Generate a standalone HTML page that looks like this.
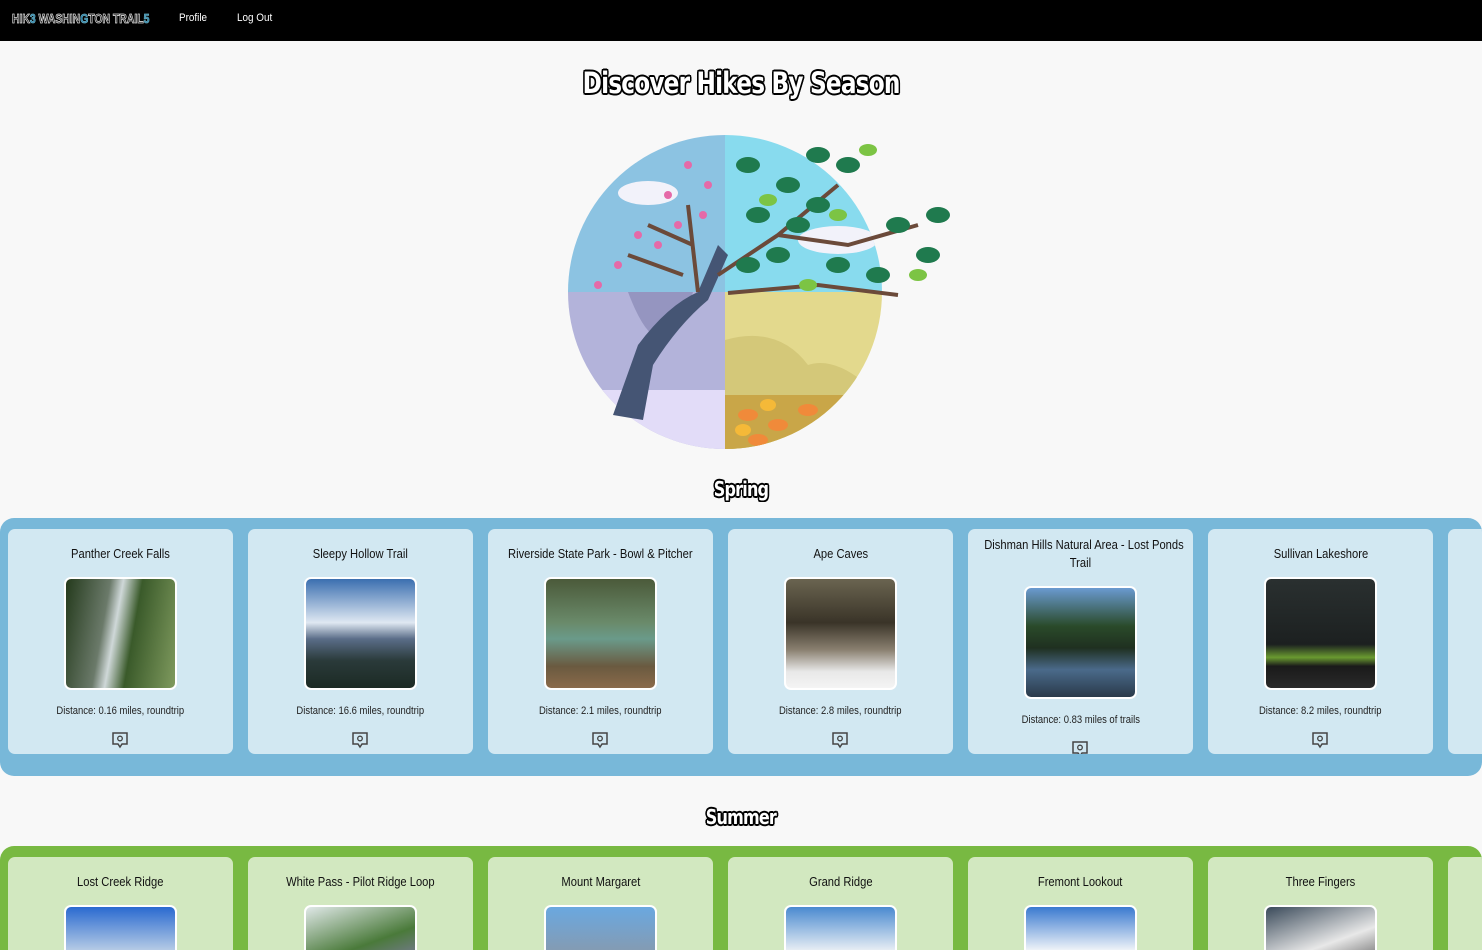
<!DOCTYPE html>
<html><head><meta charset="utf-8">
<style>
*{margin:0;padding:0;box-sizing:border-box}
html,body{width:1482px;height:950px;overflow:hidden}
body{background:#f8f8f8;font-family:"Liberation Sans",sans-serif;position:relative}
.nav{position:absolute;left:0;top:0;width:1482px;height:41px;background:#000}
.logo{position:absolute;left:12px;top:11px;font:bold 13px "Liberation Sans",sans-serif;color:#111;-webkit-text-stroke:0.8px #ddd;white-space:nowrap;transform:scaleX(0.8);transform-origin:0 0}
.logo b{color:#2a7ca8;-webkit-text-stroke:0.8px #6ab}
.nav a{position:absolute;top:12px;color:#fff;font-size:11px;text-decoration:none;transform:scaleX(0.9);transform-origin:0 0}
.h{position:absolute;left:0;width:1482px;text-align:center;color:#fff;font-family:"DejaVu Sans","Liberation Sans",sans-serif;font-weight:bold;letter-spacing:-1px;text-shadow:-1.5px -1.5px 0 #000,1.5px -1.5px 0 #000,-1.5px 1.5px 0 #000,1.5px 1.5px 0 #000,0 2px 0 #000,2px 0 0 #000,-2px 0 0 #000,0 -2px 0 #000}
.h span{display:inline-block;transform:scaleX(0.8)}
.row{position:absolute;left:0;width:1482px;border-radius:14px;overflow:hidden}
.card{position:absolute;top:11px;width:225px;height:225px;border-radius:7px;text-align:center;overflow:hidden}
.t{position:absolute;left:0;width:225px;font-size:13px;color:#111;line-height:18px;white-space:nowrap}
.t span,.d span{display:inline-block;transform:scaleX(0.86)}
.p{position:absolute;left:56px;width:113px;height:113px;border:2px solid #fff;border-radius:7px}
.d{position:absolute;left:0;width:225px;font-size:11px;color:#222;white-space:nowrap}
.i{position:absolute;left:103px}
.s .card{height:93px;border-radius:7px 7px 0 0}
</style></head><body>
<div class="nav">
<div class="logo">HIK<b>3</b> WASHIN<b>G</b>TON TRAIL<b>5</b></div>
<a style="left:179px">Profile</a><a style="left:237px">Log Out</a>
</div>
<div class="h" style="top:66px;font-size:29px"><span>Discover Hikes By Season</span></div>
<svg style="position:absolute;left:518px;top:125px" width="448" height="332" viewBox="0 0 448 332">
<defs><clipPath id="c"><circle cx="207" cy="167" r="157"/></clipPath></defs>
<g clip-path="url(#c)">
<rect x="0" y="0" width="207" height="167" fill="#8cc3e2"/>
<rect x="207" y="0" width="250" height="167" fill="#88dbee"/>
<rect x="0" y="167" width="207" height="170" fill="#b3b3da"/>
<rect x="0" y="265" width="207" height="70" fill="#e2dcf8"/>
<path d="M110 167 Q145 260 175 167Z" fill="#9595c0"/>
<rect x="207" y="167" width="250" height="170" fill="#e3d98d"/>
<path d="M207 215 Q260 200 290 240 Q320 230 360 270 L360 340 L207 340Z" fill="#d4c879"/>
<rect x="207" y="270" width="140" height="70" fill="#c9a648"/>
<g fill="#f08a3a"><ellipse cx="230" cy="290" rx="10" ry="6"/><ellipse cx="260" cy="300" rx="10" ry="6"/><ellipse cx="290" cy="285" rx="10" ry="6"/><ellipse cx="240" cy="315" rx="10" ry="6"/><ellipse cx="280" cy="320" rx="10" ry="6"/><ellipse cx="310" cy="300" rx="10" ry="6"/></g>
<g fill="#f5b938"><ellipse cx="250" cy="280" rx="8" ry="6"/><ellipse cx="300" cy="315" rx="8" ry="6"/><ellipse cx="225" cy="305" rx="8" ry="6"/></g>
<ellipse cx="130" cy="68" rx="30" ry="12" fill="#f2f2fa"/>
<ellipse cx="320" cy="115" rx="40" ry="14" fill="#f2f2fa"/>
</g>
<path d="M95 290 L120 220 Q150 180 180 167 L200 120 L210 130 L190 175 Q160 200 135 240 L125 295Z" fill="#455574"/>
<path d="M180 167 L170 80 M175 120 L130 100 M165 150 L110 130 M200 150 L260 110 L320 60 M260 110 L330 120 L400 100 M210 168 L300 160 L380 170" stroke="#6b4a3a" stroke-width="4" fill="none"/>
<g fill="#e56aa8"><circle cx="170" cy="40" r="4"/><circle cx="150" cy="70" r="4"/><circle cx="120" cy="110" r="4"/><circle cx="100" cy="140" r="4"/><circle cx="80" cy="160" r="4"/><circle cx="185" cy="90" r="4"/><circle cx="140" cy="120" r="4"/><circle cx="190" cy="60" r="4"/><circle cx="160" cy="100" r="4"/></g>
<g fill="#1f7a4e"><ellipse cx="230" cy="40" rx="12" ry="8"/><ellipse cx="270" cy="60" rx="12" ry="8"/><ellipse cx="300" cy="30" rx="12" ry="8"/><ellipse cx="240" cy="90" rx="12" ry="8"/><ellipse cx="280" cy="100" rx="12" ry="8"/><ellipse cx="330" cy="40" rx="12" ry="8"/><ellipse cx="230" cy="140" rx="12" ry="8"/><ellipse cx="260" cy="130" rx="12" ry="8"/><ellipse cx="320" cy="140" rx="12" ry="8"/><ellipse cx="380" cy="100" rx="12" ry="8"/><ellipse cx="410" cy="130" rx="12" ry="8"/><ellipse cx="420" cy="90" rx="12" ry="8"/><ellipse cx="360" cy="150" rx="12" ry="8"/><ellipse cx="300" cy="80" rx="12" ry="8"/></g>
<g fill="#7cc444"><ellipse cx="250" cy="75" rx="9" ry="6"/><ellipse cx="320" cy="90" rx="9" ry="6"/><ellipse cx="400" cy="150" rx="9" ry="6"/><ellipse cx="290" cy="160" rx="9" ry="6"/><ellipse cx="350" cy="25" rx="9" ry="6"/></g>
</svg>
<div class="h" style="top:477px;font-size:20px"><span>Spring</span></div>
<div class="h" style="top:805px;font-size:20px"><span>Summer</span></div>

<div class="row" style="top:518px;height:258px;background:#78b8d9">
<div class="card" style="left:8px;background:#d2e8f2"><div class="t" style="top:16px"><span>Panther Creek Falls</span></div><div class="p" style="top:48px;background:linear-gradient(100deg,#243a1c,#6b7a6a 35%,#cfd8d8 45%,#3a5a2a 60%,#7f9a5e)"></div><div class="d" style="top:176px"><span>Distance: 0.16 miles, roundtrip</span></div>
<svg class="i" style="top:202px" width="18" height="18" viewBox="0 0 18 18"><path d="M2 2h14v11h-5l-2 3-2-3H2z" fill="none" stroke="#444" stroke-width="1.5"/><circle cx="9" cy="7.5" r="2.3" fill="none" stroke="#444" stroke-width="1.3"/></svg></div>
<div class="card" style="left:248px;background:#d2e8f2"><div class="t" style="top:16px"><span>Sleepy Hollow Trail</span></div><div class="p" style="top:48px;background:linear-gradient(180deg,#3b6fb0,#dfe8f2 40%,#5a6d88 55%,#2a3a3a 75%,#1c2a24)"></div><div class="d" style="top:176px"><span>Distance: 16.6 miles, roundtrip</span></div>
<svg class="i" style="top:202px" width="18" height="18" viewBox="0 0 18 18"><path d="M2 2h14v11h-5l-2 3-2-3H2z" fill="none" stroke="#444" stroke-width="1.5"/><circle cx="9" cy="7.5" r="2.3" fill="none" stroke="#444" stroke-width="1.3"/></svg></div>
<div class="card" style="left:488px;background:#d2e8f2"><div class="t" style="top:16px"><span>Riverside State Park - Bowl &amp; Pitcher</span></div><div class="p" style="top:48px;background:linear-gradient(180deg,#4b5a3a,#6a8a6a 40%,#6a9a8a 55%,#6a5a40 80%,#8a6a4a)"></div><div class="d" style="top:176px"><span>Distance: 2.1 miles, roundtrip</span></div>
<svg class="i" style="top:202px" width="18" height="18" viewBox="0 0 18 18"><path d="M2 2h14v11h-5l-2 3-2-3H2z" fill="none" stroke="#444" stroke-width="1.5"/><circle cx="9" cy="7.5" r="2.3" fill="none" stroke="#444" stroke-width="1.3"/></svg></div>
<div class="card" style="left:728px;background:#d2e8f2"><div class="t" style="top:16px"><span>Ape Caves</span></div><div class="p" style="top:48px;background:linear-gradient(180deg,#6a6450,#3a3428 40%,#8a8070 65%,#e8e8e8 85%,#f4f4f4)"></div><div class="d" style="top:176px"><span>Distance: 2.8 miles, roundtrip</span></div>
<svg class="i" style="top:202px" width="18" height="18" viewBox="0 0 18 18"><path d="M2 2h14v11h-5l-2 3-2-3H2z" fill="none" stroke="#444" stroke-width="1.5"/><circle cx="9" cy="7.5" r="2.3" fill="none" stroke="#444" stroke-width="1.3"/></svg></div>
<div class="card" style="left:968px;background:#d2e8f2"><div class="t" style="top:7px"><span>Dishman Hills Natural Area - Lost Ponds</span><br><span>Trail</span></div><div class="p" style="top:57px;background:linear-gradient(180deg,#6a9ad0,#2a4a2a 35%,#1f3020 55%,#4a6a8a 75%,#2a3a4a)"></div><div class="d" style="top:185px"><span>Distance: 0.83 miles of trails</span></div>
<svg class="i" style="top:211px" width="18" height="18" viewBox="0 0 18 18"><path d="M2 2h14v11h-5l-2 3-2-3H2z" fill="none" stroke="#444" stroke-width="1.5"/><circle cx="9" cy="7.5" r="2.3" fill="none" stroke="#444" stroke-width="1.3"/></svg></div>
<div class="card" style="left:1208px;background:#d2e8f2"><div class="t" style="top:16px"><span>Sullivan Lakeshore</span></div><div class="p" style="top:48px;background:linear-gradient(180deg,#2a3030,#1c2020 60%,#6a9a30 72%,#1a1a1a 80%,#2a2a2a)"></div><div class="d" style="top:176px"><span>Distance: 8.2 miles, roundtrip</span></div>
<svg class="i" style="top:202px" width="18" height="18" viewBox="0 0 18 18"><path d="M2 2h14v11h-5l-2 3-2-3H2z" fill="none" stroke="#444" stroke-width="1.5"/><circle cx="9" cy="7.5" r="2.3" fill="none" stroke="#444" stroke-width="1.3"/></svg></div>
<div class="card" style="left:1448px;background:#d2e8f2"></div>
</div>

<div class="row s" style="top:846px;height:104px;border-radius:14px 14px 0 0;background:#78b942">
<div class="card" style="left:8px;background:#d2e8c0"><div class="t" style="top:16px"><span>Lost Creek Ridge</span></div><div class="p" style="top:48px;background:linear-gradient(180deg,#2a6ad0,#c8d8e8 45%,#3a5a3a 70%,#a09080)"></div></div>
<div class="card" style="left:248px;background:#d2e8c0"><div class="t" style="top:16px"><span>White Pass - Pilot Ridge Loop</span></div><div class="p" style="top:48px;background:linear-gradient(160deg,#e0e8e8,#4a7a3a 40%,#8a7ab8 70%)"></div></div>
<div class="card" style="left:488px;background:#d2e8c0"><div class="t" style="top:16px"><span>Mount Margaret</span></div><div class="p" style="top:48px;background:linear-gradient(180deg,#6aa8e0,#8a98a8 50%)"></div></div>
<div class="card" style="left:728px;background:#d2e8c0"><div class="t" style="top:16px"><span>Grand Ridge</span></div><div class="p" style="top:48px;background:linear-gradient(180deg,#4a8ad0,#e8eef4 40%,#7a9ab0)"></div></div>
<div class="card" style="left:968px;background:#d2e8c0"><div class="t" style="top:16px"><span>Fremont Lookout</span></div><div class="p" style="top:48px;background:linear-gradient(180deg,#3a7ad0,#f0f4f8 40%,#5a8ad0)"></div></div>
<div class="card" style="left:1208px;background:#d2e8c0"><div class="t" style="top:16px"><span>Three Fingers</span></div><div class="p" style="top:48px;background:linear-gradient(160deg,#3a4a5a,#e8e8e8 40%,#4a4a4a 70%)"></div></div>
<div class="card" style="left:1448px;background:#d2e8c0"></div>
</div>
</body></html>
